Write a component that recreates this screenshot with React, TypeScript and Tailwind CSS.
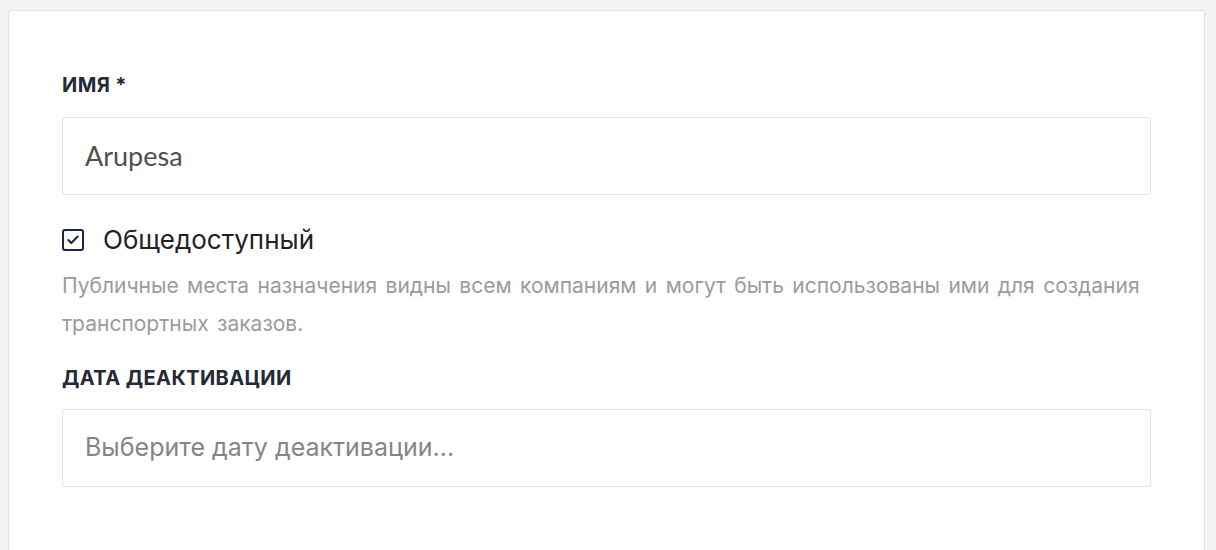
import { Check } from 'lucide-react'

const ui = "font-['Inter','Noto_Sans',sans-serif]"

export default function App() {
  return (
    <div className="min-h-[550px] bg-[#f3f3f3] pt-[10px] pl-[8px] pr-[11px]">
      <div className={`${ui} min-h-[560px] rounded-tl-[4px] border border-[#e2e2e2] bg-white px-[53px] pt-[62px]`}>
        {/* Имя */}
        <label className="block text-[20px] font-bold leading-[24px] tracking-[0.4px] text-[#262a36]">
          ИМЯ *
        </label>
        <div className="mt-[20px] flex h-[78px] items-center rounded-[3px] border border-[#e3e3e3] px-[22px]">
          <span className="font-['Lato',sans-serif] text-[27px] text-[#4f4f4f]">Arupesa</span>
        </div>

        {/* Общедоступный */}
        <div className="mt-[31px] flex h-[28px] items-center gap-[19px]">
          <span className="flex h-[22px] w-[22px] items-center justify-center rounded-[3px] border-2 border-[#1b2546]">
            <Check size={14} strokeWidth={3.5} className="text-[#1b2546]" />
          </span>
          <span className="text-[26px] leading-[28px] text-[#222222]">Общедоступный</span>
        </div>
        <p className="mt-[13px] text-[21px] leading-[38px] [word-spacing:2.5px] text-[#9b9b9b]">
          Публичные места назначения видны всем компаниям и могут быть использованы ими для создания
          транспортных заказов.
        </p>

        {/* Дата деактивации */}
        <label className="mt-[23px] block text-[20px] font-bold leading-[24px] tracking-[0.4px] text-[#262a36]">
          ДАТА ДЕАКТИВАЦИИ
        </label>
        <div className="mt-[19px] flex h-[78px] items-center rounded-[3px] border border-[#e3e3e3] px-[22px]">
          <span className="text-[25px] text-[#858585]">Выберите дату деактивации...</span>
        </div>
      </div>
    </div>
  )
}
